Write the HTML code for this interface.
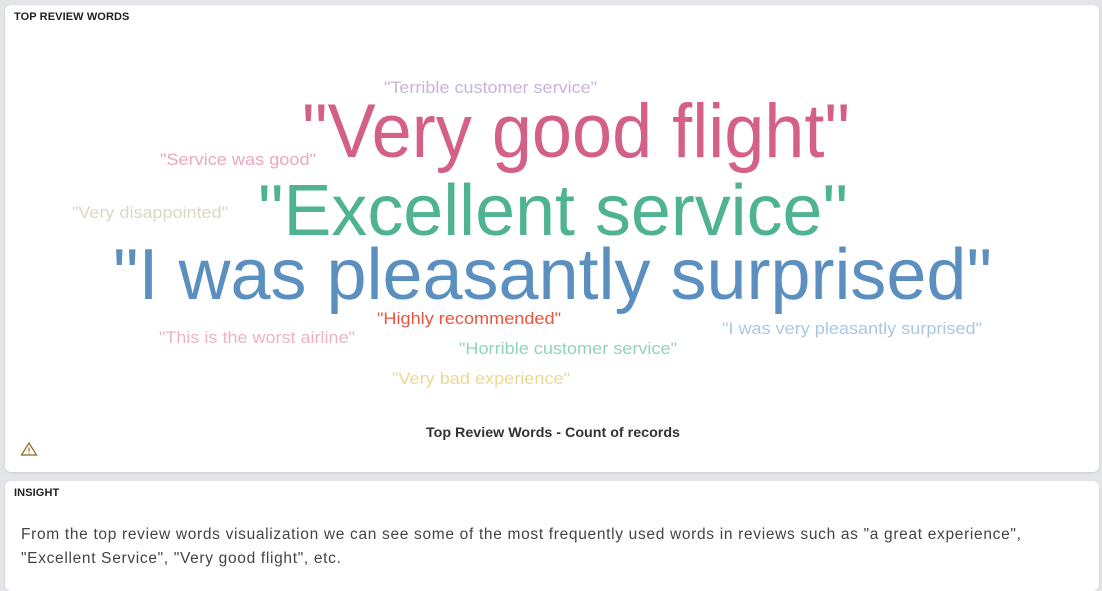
<!DOCTYPE html>
<html><head><meta charset="utf-8"><style>
body{margin:0;width:1102px;height:583px;background:#e4e5e9;font-family:"Liberation Sans",sans-serif;overflow:hidden;position:relative}
.p{position:absolute;background:#fff;border-radius:6px;box-shadow:0 1px 2px rgba(0,0,0,.12)}
.t{position:absolute;left:9px;font-size:11px;font-weight:bold;color:#222;letter-spacing:.1px}
</style></head><body>
<div class="p" style="left:5px;top:5px;width:1094px;height:467px">
<div class="t" style="top:6px">TOP REVIEW WORDS</div>
</div>
<svg style="position:absolute;left:0;top:0" width="1102" height="583" font-family="Liberation Sans, sans-serif">
<text x="384" y="93" font-size="17" fill="#c8b4dc" textLength="213" lengthAdjust="spacingAndGlyphs">"Terrible customer service"</text>
<text x="302" y="157" font-size="76" fill="#d45f87" textLength="548" lengthAdjust="spacingAndGlyphs">"Very good flight"</text>
<text x="160" y="165" font-size="17" fill="#eca7bf" textLength="156" lengthAdjust="spacingAndGlyphs">"Service was good"</text>
<text x="258" y="235" font-size="72" fill="#4fb391" textLength="590" lengthAdjust="spacingAndGlyphs">"Excellent service"</text>
<text x="72" y="218" font-size="17" fill="#dcd6c4" textLength="156" lengthAdjust="spacingAndGlyphs">"Very disappointed"</text>
<text x="113" y="299" font-size="72" fill="#5b8fc0" textLength="879" lengthAdjust="spacingAndGlyphs">"I was pleasantly surprised"</text>
<text x="377" y="324" font-size="17" fill="#e8553e" textLength="184" lengthAdjust="spacingAndGlyphs">"Highly recommended"</text>
<text x="159" y="343" font-size="17" fill="#eab3c7" textLength="196" lengthAdjust="spacingAndGlyphs">"This is the worst airline"</text>
<text x="722" y="334" font-size="17" fill="#a9c8e4" textLength="260" lengthAdjust="spacingAndGlyphs">"I was very pleasantly surprised"</text>
<text x="459" y="354" font-size="17" fill="#92d2bc" textLength="218" lengthAdjust="spacingAndGlyphs">"Horrible customer service"</text>
<text x="392" y="384" font-size="17" fill="#ecd991" textLength="178" lengthAdjust="spacingAndGlyphs">"Very bad experience"</text>
<text x="553" y="437" font-size="14" font-weight="bold" fill="#333" text-anchor="middle" textLength="254" lengthAdjust="spacingAndGlyphs">Top Review Words - Count of records</text>
<g fill="none" stroke="#8a6a1a" stroke-width="1.2"><path d="M29 443 L36.5 455 L21.5 455 Z"/><path d="M29 447.5 V451.5 M29 452.8 V453.8"/></g>
</svg>
<div class="p" style="left:5px;top:481px;width:1094px;height:110px">
<div class="t" style="top:6px">INSIGHT</div>
<div style="position:absolute;left:16px;top:42px;font-size:15.5px;line-height:24px;color:#444;white-space:nowrap;letter-spacing:0.68px">From the top review words visualization we can see some of the most frequently used words in reviews such as "a great experience",<br>"Excellent Service", "Very good flight", etc.</div>
</div>
</body></html>
